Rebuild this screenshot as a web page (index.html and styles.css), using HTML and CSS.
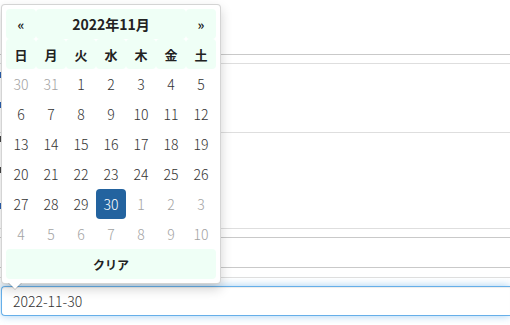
FILE: index.html
```html
<!DOCTYPE html>
<html lang="ja">
<head>
<meta charset="utf-8">
<title>日付選択</title>
<link rel="stylesheet" href="styles.css">
</head>
<body>
<div class="page">
  <div class="blk blk1"></div>
  <div class="blk blk2"></div>
  <div class="blk blk3"><span class="mark mark-blue m1"></span><span class="mark mark-blue m2"></span></div>
  <div class="blk blk4"><span class="mark m3"></span><span class="mark m4"></span><span class="mark mark-blue m5"></span></div>
  <div class="blk blk5"></div>
  <div class="blk blk6"></div>
  <div class="blk blk7"></div>
  <input class="date-input" type="text" value="2022-11-30">
</div>

<div class="datepicker">
  <div class="grid">
    <div class="th nav">«</div>
    <div class="th title">2022年11月</div>
    <div class="th nav">»</div>
    <div class="th dow">日</div>
    <div class="th dow">月</div>
    <div class="th dow">火</div>
    <div class="th dow">水</div>
    <div class="th dow">木</div>
    <div class="th dow">金</div>
    <div class="th dow">土</div>

    <div class="day old">30</div><div class="day old">31</div><div class="day">1</div><div class="day">2</div><div class="day">3</div><div class="day">4</div><div class="day">5</div>
    <div class="day">6</div><div class="day">7</div><div class="day">8</div><div class="day">9</div><div class="day">10</div><div class="day">11</div><div class="day">12</div>
    <div class="day">13</div><div class="day">14</div><div class="day">15</div><div class="day">16</div><div class="day">17</div><div class="day">18</div><div class="day">19</div>
    <div class="day">20</div><div class="day">21</div><div class="day">22</div><div class="day">23</div><div class="day">24</div><div class="day">25</div><div class="day">26</div>
    <div class="day">27</div><div class="day">28</div><div class="day">29</div><div class="day active">30</div><div class="day new">1</div><div class="day new">2</div><div class="day new">3</div>
    <div class="day new">4</div><div class="day new">5</div><div class="day new">6</div><div class="day new">7</div><div class="day new">8</div><div class="day new">9</div><div class="day new">10</div>

    <div class="th clear">クリア</div>
  </div>
</div>
</body>
</html>
```

FILE: styles.css
```css
html, body {
  margin: 0;
  padding: 0;
  background: #fff;
  overflow: hidden;
}
body {
  font-family: "Noto Sans CJK JP", "Noto Sans", sans-serif;
  color: #333;
  width: 510px;
  height: 325px;
  position: relative;
}
.page {
  display: flex;
  flex-direction: column;
}
.blk {
  position: relative;
  flex: none;
}
.blk1 { height: 54px; border-bottom: 1px solid #c9c9c9; }
.blk2 { height: 8px; border-bottom: 1px solid #dedede; }
.blk3 { height: 68px; border-bottom: 1px solid #dedede; }
.blk4 { height: 95px; border-bottom: 1px solid #dedede; }
.blk5 { height: 8px; border-bottom: 1px solid #c9c9c9; }
.blk6 { height: 29px; border-bottom: 1px solid #c9c9c9; }
.blk7 { height: 9px; border-bottom: 1px solid #dedede; }

.mark {
  position: absolute;
  left: 0;
  width: 2px;
  height: 6px;
  background: #444;
}
.mark-blue { background: #2a5fb0; }
.m1 { top: 8px; }
.m2 { top: 38px; }
.m3 { top: 3px; }
.m4 { top: 34px; }
.m5 { top: 70px; }

.date-input {
  margin: 8px 0 0 1px;
  width: 509px;
  height: 30px;
  box-sizing: border-box;
  border: 1px solid #66afe9;
  border-right: none;
  border-radius: 4px 0 0 4px;
  padding: 0 11px;
  font-family: "Noto Sans CJK JP", "Noto Sans", sans-serif;
  font-size: 14px;
  font-weight: 300;
  color: #333;
  outline: none;
  box-shadow: inset 0 1px 1px rgba(0,0,0,.075), 0 0 8px rgba(102,175,233,.6);
}

.datepicker {
  position: absolute;
  left: 1px;
  top: 4px;
  width: 220px;
  box-sizing: border-box;
  padding: 4px;
  background: #fff;
  border: 1px solid rgba(0,0,0,.17);
  border-radius: 4px;
  box-shadow: 0 5px 12px rgba(0,0,0,.18);
}
.datepicker::before {
  content: "";
  position: absolute;
  left: 6px;
  bottom: -7px;
  border-left: 7px solid transparent;
  border-right: 7px solid transparent;
  border-top: 7px solid rgba(0,0,0,.18);
}
.datepicker::after {
  content: "";
  position: absolute;
  left: 7px;
  bottom: -6px;
  border-left: 6px solid transparent;
  border-right: 6px solid transparent;
  border-top: 6px solid #fff;
}
.grid {
  display: grid;
  grid-template-columns: repeat(7, 30px);
  grid-auto-rows: 30px;
}
.th, .day {
  display: flex;
  align-items: center;
  justify-content: center;
  border-radius: 4px;
}
.th {
  background: #effff6;
  font-weight: 700;
  color: #222;
}
.nav { font-size: 13px; }
.title { grid-column: span 5; font-size: 14px; }
.dow { font-size: 13px; }
.clear { grid-column: span 7; font-size: 12px; }
.day {
  font-size: 14px;
  font-weight: 300;
  color: #333;
}
.day.old, .day.new { color: #a3a3a3; }
.day.active {
  background: #23639f;
  color: #fff;
}
```
